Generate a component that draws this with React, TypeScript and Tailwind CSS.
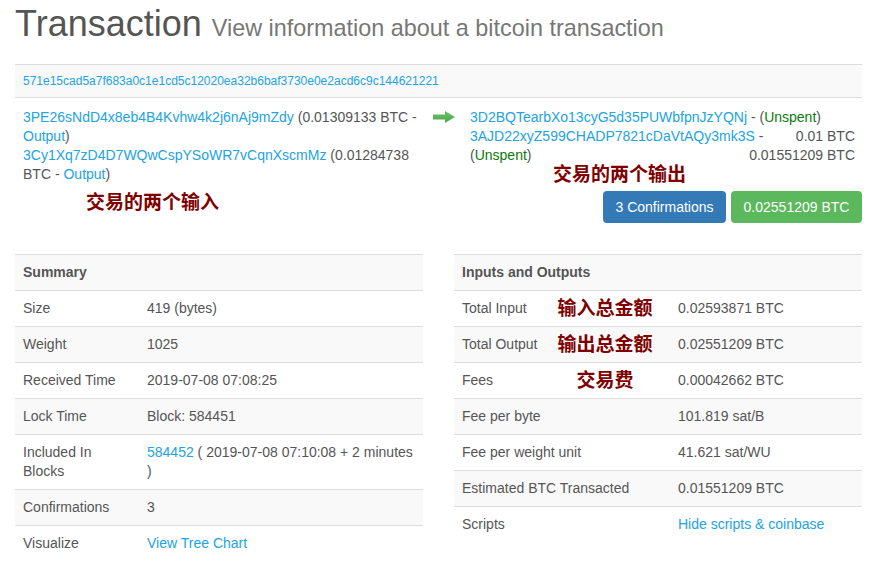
import React from 'react';

const link = 'text-[#22a3e2]';

const Note = ({ children, className = '' }: { children: React.ReactNode; className?: string }) => (
  <span className={`block font-bold text-[19px] leading-[19px] text-[#800000] ${className}`}>{children}</span>
);

const summaryRows: { label: React.ReactNode; value: React.ReactNode }[] = [
  { label: 'Size', value: '419 (bytes)' },
  { label: 'Weight', value: '1025' },
  { label: 'Received Time', value: '2019-07-08 07:08:25' },
  { label: 'Lock Time', value: 'Block: 584451' },
  {
    label: (
      <>
        Included In
        <br />
        Blocks
      </>
    ),
    value: (
      <>
        <span className={link}>584452</span> ( 2019-07-08 07:10:08 + 2 minutes
        <br />)
      </>
    ),
  },
  { label: 'Confirmations', value: '3' },
  { label: 'Visualize', value: <span className={link}>View Tree Chart</span> },
];

const ioRows: { label: string; note?: string; value: React.ReactNode }[] = [
  { label: 'Total Input', note: '输入总金额', value: '0.02593871 BTC' },
  { label: 'Total Output', note: '输出总金额', value: '0.02551209 BTC' },
  { label: 'Fees', note: '交易费', value: '0.00042662 BTC' },
  { label: 'Fee per byte', value: '101.819 sat/B' },
  { label: 'Fee per weight unit', value: '41.621 sat/WU' },
  { label: 'Estimated BTC Transacted', value: '0.01551209 BTC' },
  { label: 'Scripts', value: <span className={link}>Hide scripts &amp; coinbase</span> },
];

const App = () => {
  return (
    <div
      className="w-[879px] h-[581px] bg-white text-[#555] text-[14px] leading-[19px] overflow-hidden"
      style={{ fontFamily: '"Liberation Sans", "Noto Sans CJK SC", Arial, sans-serif' }}
    >
      <div className="ml-[15px] w-[847px] pt-[4px]">
        {/* Page heading */}
        <h1 className="text-[36px] leading-[40px] text-[#555] whitespace-nowrap">
          Transaction <span className="text-[23.4px] text-[#777]">View information about a bitcoin transaction</span>
        </h1>

        {/* Hash */}
        <div className="mt-[16px] h-[34px] flex items-center px-[8px] bg-[#f9f9f9] border-y border-[#ddd] text-[12px]">
          <span className={link}>571e15cad5a7f683a0c1e1cd5c12020ea32b6baf3730e0e2acd6c9c144621221</span>
        </div>

        {/* Inputs -> outputs */}
        <div className="flex pt-[10px]">
          <div className="w-[408px] pl-[8px]">
            <div>
              <span className={link}>3PE26sNdD4x8eb4B4Kvhw4k2j6nAj9mZdy</span> (0.01309133 BTC -
              <br />
              <span className={link}>Output</span>)
            </div>
            <div>
              <span className={link}>3Cy1Xq7zD4D7WQwCspYSoWR7vCqnXscmMz</span> (0.01284738
              <br />
              BTC - <span className={link}>Output</span>)
            </div>
            <Note className="mt-[9px] ml-[63px]">交易的两个输入</Note>
          </div>

          <div className="w-[47px] flex justify-center items-start pt-[3px] pr-[5px]">
            <svg width="22" height="12" viewBox="0 0 22 12">
              <defs>
                <linearGradient id="ag" x1="0" y1="0" x2="0" y2="1">
                  <stop offset="0" stopColor="#6cc46c" />
                  <stop offset="1" stopColor="#4aa84a" />
                </linearGradient>
              </defs>
              <path d="M0 3.5 H12 V0 L22 6 L12 12 V8.5 H0 Z" fill="url(#ag)" />
            </svg>
          </div>

          <div className="flex-1 pr-[7px]">
            <div>
              <span className={link}>3D2BQTearbXo13cyG5d35PUWbfpnJzYQNj</span> - (
              <span className="text-[#0a7a0a]">Unspent</span>)
            </div>
            <div className="flex justify-between">
              <span>
                <span className={link}>3AJD22xyZ599CHADP7821cDaVtAQy3mk3S</span> -
              </span>
              <span>0.01 BTC</span>
            </div>
            <div className="flex justify-between">
              <span>
                (<span className="text-[#0a7a0a]">Unspent</span>)
              </span>
              <span>0.01551209 BTC</span>
            </div>
            <Note className="ml-[83px]">交易的两个输出</Note>
            <div className="flex justify-end gap-[5px] mt-[7px] -mr-[7px]">
              <button className="h-[32px] w-[123px] rounded-[4px] bg-[#337ab7] text-white text-[14px]">
                3 Confirmations
              </button>
              <button className="h-[32px] w-[131px] rounded-[4px] bg-[#5cb85c] text-white text-[14px]">
                0.02551209 BTC
              </button>
            </div>
          </div>
        </div>

        {/* Tables */}
        <div className="flex justify-between mt-[31px]">
          <div className="w-[408px]">
            <div className="h-[36px] flex items-center px-[8px] bg-[#f9f9f9] border-t border-[#ddd] font-bold">
              Summary
            </div>
            {summaryRows.map((r, i) => (
              <div
                key={i}
                className={`flex border-t border-[#ddd] py-[8px] ${i % 2 === 1 ? 'bg-[#f9f9f9]' : 'bg-white'}`}
              >
                <div className="w-[132px] pl-[8px]">{r.label}</div>
                <div className="flex-1 pr-[8px]">{r.value}</div>
              </div>
            ))}
          </div>

          <div className="w-[408px]">
            <div className="h-[36px] flex items-center px-[8px] bg-[#f9f9f9] border-t border-[#ddd] font-bold">
              Inputs and Outputs
            </div>
            {ioRows.map((r, i) => (
              <div
                key={i}
                className={`flex border-t border-[#ddd] py-[8px] ${i % 2 === 1 ? 'bg-[#f9f9f9]' : 'bg-white'}`}
              >
                <div className="w-[224px] pl-[8px] flex whitespace-nowrap">
                  <span className={r.note ? 'w-[87px]' : ''}>{r.label}</span>
                  {r.note && <Note className="w-[112px] text-center">{r.note}</Note>}
                </div>
                <div className="flex-1 pr-[8px]">{r.value}</div>
              </div>
            ))}
          </div>
        </div>
      </div>
    </div>
  );
};

export default App;
